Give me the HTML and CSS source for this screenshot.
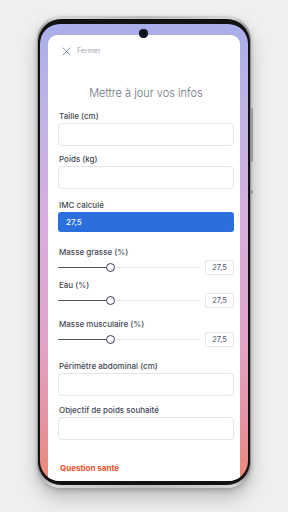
FILE: index.html
```html
<!DOCTYPE html>
<html lang="fr">
<head>
<meta charset="utf-8">
<link rel="stylesheet" href="styles.css">
</head>
<body>
<div class="phone">
  <span class="side-btn btn-a"></span>
  <span class="side-btn btn-b"></span>
  <div class="bezel">
    <div class="screen">
      <span class="camera"></span>
      <div class="sheet">
        <div class="close-row">
          <svg class="close-icon" viewBox="0 0 10 10" width="9" height="9"><path d="M1 1L9 9M9 1L1 9" stroke="#8a94a6" stroke-width="1.1" fill="none" stroke-linecap="round"/></svg>
          <span class="close-text">Fermer</span>
        </div>
        <h1 class="title">Mettre à jour vos infos</h1>

        <div class="field f1">
          <div class="label">Taille (cm)</div>
          <div class="input"></div>
        </div>
        <div class="field f2">
          <div class="label">Poids (kg)</div>
          <div class="input"></div>
        </div>
        <div class="field f3">
          <div class="label">IMC calculé</div>
          <div class="imc">27,5</div>
        </div>
        <div class="field slider-field f4">
          <div class="label">Masse grasse (%)</div>
          <div class="slider-row">
            <div class="track"><span class="fill" style="width:52px"></span><span class="thumb" style="left:52px"></span></div>
            <div class="value">27,5</div>
          </div>
        </div>
        <div class="field slider-field f5">
          <div class="label">Eau (%)</div>
          <div class="slider-row">
            <div class="track"><span class="fill" style="width:52px"></span><span class="thumb" style="left:52px"></span></div>
            <div class="value">27,5</div>
          </div>
        </div>
        <div class="field slider-field f6">
          <div class="label">Masse musculaire (%)</div>
          <div class="slider-row">
            <div class="track"><span class="fill" style="width:52px"></span><span class="thumb" style="left:52px"></span></div>
            <div class="value">27,5</div>
          </div>
        </div>
        <div class="field f7">
          <div class="label">Périmètre abdominal (cm)</div>
          <div class="input"></div>
        </div>
        <div class="field f8">
          <div class="label">Objectif de poids souhaité</div>
          <div class="input"></div>
        </div>
        <div class="health">Question santé</div>
      </div>
    </div>
  </div>
</div>
</body>
</html>
```
FILE: styles.css
```css
* { box-sizing: border-box; }
html, body { margin: 0; padding: 0; }
body {
  width: 288px;
  height: 512px;
  overflow: hidden;
  background: #efefef;
  font-family: Inter, "Noto Sans", sans-serif;
}
.phone {
  position: relative;
  margin: 16px 0 0 37px;
  width: 214px;
  height: 472px;
  padding: 3px 1px 3px 1px;
  border-radius: 24px;
  background: linear-gradient(90deg, #9a9a9a, #d8d8d8 8%, #bdbdbd 50%, #d6d6d6 92%, #8e8e8e);
  box-shadow: 0 10px 18px rgba(0,0,0,0.22), 0 2px 4px rgba(0,0,0,0.2);
}
.side-btn {
  position: absolute;
  right: -2px;
  width: 2px;
  background: #9b9b9b;
  border-radius: 1px;
}
.btn-a { top: 92px; height: 54px; }
.btn-b { top: 174px; height: 4px; }
.bezel {
  height: 100%;
  padding: 5px 2px 4px 2px;
  border-radius: 23px;
  background: #121212;
}
.screen {
  position: relative;
  height: 100%;
  padding: 11px 8px 0 8px;
  border-radius: 20px;
  overflow: hidden;
  background:
    linear-gradient(180deg, #a9afe9 0%, #c1b3e6 20%, #d8aedc 45%, #e2a3c8 70%, #e7909a 90%, #ec8a78 100%);
}
.camera {
  position: absolute;
  top: 5px;
  left: 99px;
  width: 9px;
  height: 9px;
  border-radius: 50%;
  background: #0c0c14;
  box-shadow: inset 0 0 0 2px #1b1b2a;
}
.sheet {
  height: 100%;
  background: #ffffff;
  border-radius: 9px 9px 0 0;
  padding: 12px 6px 0 10px;
}
.close-row {
  display: flex;
  align-items: center;
  height: 8px;
  padding-left: 4px;
  gap: 6px;
}
.close-icon { display: block; }
.close-text {
  font-size: 7px;
  color: #9aa3b2;
  line-height: 8px;
}
.title {
  margin: 31px 0 0 0;
  font-size: 11px;
  line-height: 14px;
  font-weight: 300;
  color: #6b7280;
  text-align: center;
}
.label {
  font-size: 8px;
  line-height: 10px;
  color: #3f4654;
  font-weight: 500;
  margin: 0 0 2px 1px;
}
.slider-field .label { margin-bottom: 3px; }
.input {
  height: 23px;
  border: 1px solid #e3e5e9;
  border-radius: 4px;
  background: #fff;
}
.f1 { margin-top: 11px; }
.f2 { margin-top: 8px; }
.f3 { margin-top: 11px; }
.f4 { margin-top: 15px; }
.f5 { margin-top: 5px; }
.f6 { margin-top: 11px; }
.f7 { margin-top: 14px; }
.f8 { margin-top: 9px; }
.imc {
  height: 20px;
  border-radius: 3px;
  background: #2a6fdc;
  color: #ffffff;
  font-size: 8px;
  line-height: 20px;
  padding-left: 8px;
  font-weight: 500;
}
.slider-row {
  display: flex;
  align-items: center;
  gap: 6px;
  height: 15px;
}
.track {
  position: relative;
  flex: 1;
  height: 1px;
  background: #e3e5e9;
}
.fill {
  position: absolute;
  left: 0;
  top: 0;
  height: 1px;
  background: #4a5260;
}
.thumb {
  position: absolute;
  top: -4px;
  width: 9px;
  height: 9px;
  margin-left: -4.5px;
  border-radius: 50%;
  background: #fff;
  border: 1.5px solid #3a4150;
}
.value {
  width: 29px;
  height: 15px;
  border: 1px solid #e3e5e9;
  border-radius: 2px;
  font-size: 7.5px;
  line-height: 13px;
  text-align: center;
  color: #4b5563;
}
.health {
  margin: 22px 0 0 2px;
  font-size: 8px;
  line-height: 12px;
  font-weight: 700;
  color: #f0522a;
}
```
